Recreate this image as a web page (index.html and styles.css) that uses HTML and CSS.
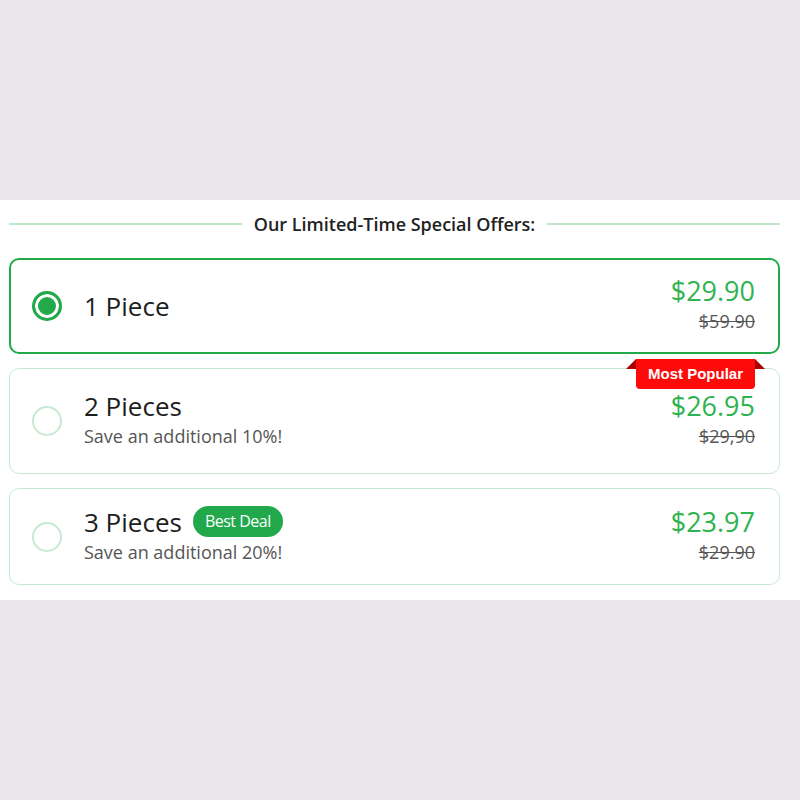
FILE: index.html
```html
<!DOCTYPE html>
<html lang="en">
<head>
    <meta charset="UTF-8">
    <meta name="viewport" content="width=device-width, initial-scale=1.0">
    <title>Special Offers</title>
    <link rel="stylesheet" href="styles.css">
</head>
<body>
    <div class="offers">
        <div class="offers-title">
            <span class="line"></span>
            <h2>Our Limited-Time Special Offers:</h2>
            <span class="line"></span>
        </div>

        <div class="offer selected">
            <span class="radio"></span>
            <div class="info">
                <div class="name">1 Piece</div>
            </div>
            <div class="price">
                <div class="now">$29.90</div>
                <div class="was">$59.90</div>
            </div>
        </div>

        <div class="offer popular">
            <span class="ribbon">Most Popular</span>
            <span class="radio"></span>
            <div class="info">
                <div class="name">2 Pieces</div>
                <div class="save">Save an additional 10%!</div>
            </div>
            <div class="price">
                <div class="now">$26.95</div>
                <div class="was">$29,90</div>
            </div>
        </div>

        <div class="offer">
            <span class="radio"></span>
            <div class="info">
                <div class="name">3 Pieces <span class="tag">Best Deal</span></div>
                <div class="save">Save an additional 20%!</div>
            </div>
            <div class="price">
                <div class="now">$23.97</div>
                <div class="was">$29.90</div>
            </div>
        </div>
    </div>
</body>
</html>
```

FILE: styles.css
```css
body {
    margin: 0;
    min-height: 100vh;
    display: flex;
    align-items: center;
    background: #e8e6eb;
    font-family: "Open Sans", "Noto Sans", sans-serif;
    color: #222222;
}
.offers {
    width: 100%;
    background: #FFFFFF;
    padding: 13px 20px 15px 9px;
    box-sizing: border-box;
    display: flex;
    flex-direction: column;
    gap: 14px;
}
.offers-title {
    display: flex;
    align-items: center;
    gap: 12px;
    margin-bottom: 9px;
}
.offers-title .line {
    flex: 1;
    height: 2px;
    background: #bfe7cb;
}
.offers-title h2 {
    margin: 0;
    font-size: 18px;
    font-weight: 600;
    line-height: 22px;
    color: #222222;
}
.offer {
    position: relative;
    display: flex;
    align-items: center;
    padding: 17px 24px 17px 22px;
    border: 1px solid #c6e9d2;
    border-radius: 10px;
}
.offer.selected {
    border: 2px solid #22a94a;
    padding: 16px 23px 16px 21px;
}
.offer.popular {
    padding-top: 22px;
    padding-bottom: 22px;
}
.radio {
    width: 30px;
    height: 30px;
    box-sizing: border-box;
    border: 2px solid #c6e9d2;
    border-radius: 50%;
    margin-right: 22px;
    flex-shrink: 0;
}
.selected .radio {
    border: 3px solid #22a94a;
    background: #22a94a;
    box-shadow: inset 0 0 0 3px #FFFFFF;
}
.info {
    flex: 1;
}
.name {
    font-size: 26px;
    line-height: 30px;
    color: #1e1e1e;
    display: flex;
    align-items: center;
}
.save {
    font-size: 18px;
    line-height: 30px;
    color: #555555;
}
.tag {
    margin-left: 11px;
    background: #20a84a;
    color: #FFFFFF;
    font-size: 16px;
    letter-spacing: -0.5px;
    line-height: 31px;
    padding: 0 12px;
    border-radius: 16px;
}
.price {
    text-align: right;
}
.price .now {
    font-size: 27px;
    line-height: 30px;
    color: #2fb350;
}
.price .was {
    font-size: 18px;
    line-height: 30px;
    color: #555555;
    text-decoration: line-through;
}
.ribbon {
    position: absolute;
    top: -10px;
    right: 24px;
    height: 30px;
    padding: 0 12px;
    background: #ff0a0a;
    color: #FFFFFF;
    font-family: "Liberation Sans", Arial, sans-serif;
    font-weight: 700;
    font-size: 15px;
    line-height: 30px;
    border-radius: 0 0 4px 4px;
}
.ribbon::before,
.ribbon::after {
    content: "";
    position: absolute;
    top: 0;
    border-bottom: 10px solid #a80000;
}
.ribbon::before {
    left: -10px;
    border-left: 10px solid transparent;
}
.ribbon::after {
    right: -10px;
    border-right: 10px solid transparent;
}
```
